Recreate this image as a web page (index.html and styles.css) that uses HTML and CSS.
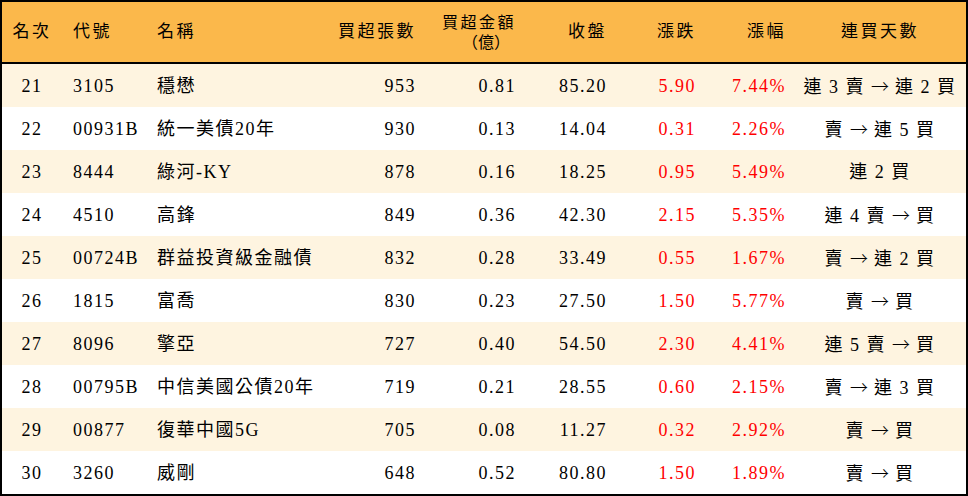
FILE: index.html
```
<!DOCTYPE html>
<html lang="zh-Hant">
<head>
<meta charset="utf-8">
<title>買超排行</title>
<link rel="stylesheet" href="styles.css">
</head>
<body>
<div class="frame">
<table class="rank">
<colgroup>
<col class="c1"><col class="c2"><col class="c3"><col class="c4"><col class="c5"><col class="c6"><col class="c7"><col class="c8"><col class="c9">
</colgroup>
<thead>
<tr>
<th class="ctr">名次</th>
<th class="lft">代號</th>
<th class="lft">名稱</th>
<th class="rgt">買超張數</th>
<th class="rgt two">買超金額<br><span class="paren">（億）</span></th>
<th class="rgt">收盤</th>
<th class="rgt">漲跌</th>
<th class="rgt">漲幅</th>
<th class="ctr">連買天數</th>
</tr>
</thead>
<tbody>
<tr class="alt"><td class="ctr">21</td><td class="lft">3105</td><td class="lft">穩懋</td><td class="rgt">953</td><td class="rgt">0.81</td><td class="rgt">85.20</td><td class="rgt up">5.90</td><td class="rgt up">7.44%</td><td class="ctr">連 3 賣 <span class="arr">→</span> 連 2 買</td></tr>
<tr><td class="ctr">22</td><td class="lft">00931B</td><td class="lft">統一美債20年</td><td class="rgt">930</td><td class="rgt">0.13</td><td class="rgt">14.04</td><td class="rgt up">0.31</td><td class="rgt up">2.26%</td><td class="ctr">賣 <span class="arr">→</span> 連 5 買</td></tr>
<tr class="alt"><td class="ctr">23</td><td class="lft">8444</td><td class="lft">綠河-KY</td><td class="rgt">878</td><td class="rgt">0.16</td><td class="rgt">18.25</td><td class="rgt up">0.95</td><td class="rgt up">5.49%</td><td class="ctr">連 2 買</td></tr>
<tr><td class="ctr">24</td><td class="lft">4510</td><td class="lft">高鋒</td><td class="rgt">849</td><td class="rgt">0.36</td><td class="rgt">42.30</td><td class="rgt up">2.15</td><td class="rgt up">5.35%</td><td class="ctr">連 4 賣 <span class="arr">→</span> 買</td></tr>
<tr class="alt"><td class="ctr">25</td><td class="lft">00724B</td><td class="lft">群益投資級金融債</td><td class="rgt">832</td><td class="rgt">0.28</td><td class="rgt">33.49</td><td class="rgt up">0.55</td><td class="rgt up">1.67%</td><td class="ctr">賣 <span class="arr">→</span> 連 2 買</td></tr>
<tr><td class="ctr">26</td><td class="lft">1815</td><td class="lft">富喬</td><td class="rgt">830</td><td class="rgt">0.23</td><td class="rgt">27.50</td><td class="rgt up">1.50</td><td class="rgt up">5.77%</td><td class="ctr">賣 <span class="arr">→</span> 買</td></tr>
<tr class="alt"><td class="ctr">27</td><td class="lft">8096</td><td class="lft">擎亞</td><td class="rgt">727</td><td class="rgt">0.40</td><td class="rgt">54.50</td><td class="rgt up">2.30</td><td class="rgt up">4.41%</td><td class="ctr">連 5 賣 <span class="arr">→</span> 買</td></tr>
<tr><td class="ctr">28</td><td class="lft">00795B</td><td class="lft">中信美國公債20年</td><td class="rgt">719</td><td class="rgt">0.21</td><td class="rgt">28.55</td><td class="rgt up">0.60</td><td class="rgt up">2.15%</td><td class="ctr">賣 <span class="arr">→</span> 連 3 買</td></tr>
<tr class="alt"><td class="ctr">29</td><td class="lft">00877</td><td class="lft">復華中國5G</td><td class="rgt">705</td><td class="rgt">0.08</td><td class="rgt">11.27</td><td class="rgt up">0.32</td><td class="rgt up">2.92%</td><td class="ctr">賣 <span class="arr">→</span> 買</td></tr>
<tr><td class="ctr">30</td><td class="lft">3260</td><td class="lft">威剛</td><td class="rgt">648</td><td class="rgt">0.52</td><td class="rgt">80.80</td><td class="rgt up">1.50</td><td class="rgt up">1.89%</td><td class="ctr">賣 <span class="arr">→</span> 買</td></tr>
</tbody>
</table>
</div>
</body>
</html>
```
FILE: styles.css
```
html, body {
  margin: 0;
  padding: 0;
  background: #ffffff;
}
.frame {
  width: 964px;
  border: 2px solid #000000;
  background: #ffffff;
}
.rank {
  width: 964px;
  table-layout: fixed;
  border-collapse: separate;
  border-spacing: 0;
  font-family: "Liberation Serif", "Noto Sans CJK TC", serif;
  font-size: 18px;
  letter-spacing: 1.5px;
  color: #000000;
}
.c1 { width: 60px; }
.c2 { width: 84px; }
.c3 { width: 184px; }
.c4 { width: 94px; }
.c5 { width: 100px; }
.c6 { width: 91px; }
.c7 { width: 89px; }
.c8 { width: 90px; }
.c9 { width: 172px; }
.rank th {
  height: 60px;
  padding: 0;
  background: #fbb84b;
  border-bottom: 2px solid #000000;
  font-weight: normal;
  font-size: 17px;
  letter-spacing: 2.5px;
  line-height: 18px;
  vertical-align: middle;
}
.rank th.two {
  line-height: 19px;
  font-size: 16px;
}
.rank td {
  height: 43px;
  padding: 0;
  vertical-align: middle;
  white-space: nowrap;
  line-height: 20px;
}
.rank tr.alt td {
  background: #fef4e0;
}
.ctr { text-align: center; }
.lft { text-align: left; padding-left: 11px !important; }
.rgt { text-align: right; padding-right: 8px !important; }
.paren {
  font-family: "Noto Sans CJK TC", sans-serif;
  letter-spacing: 0;
  padding-right: 6px;
}
.arr {
  font-family: "Noto Sans CJK TC", sans-serif;
  font-weight: 300;
  letter-spacing: 0;
}
.up { color: #ff0000; }
```
